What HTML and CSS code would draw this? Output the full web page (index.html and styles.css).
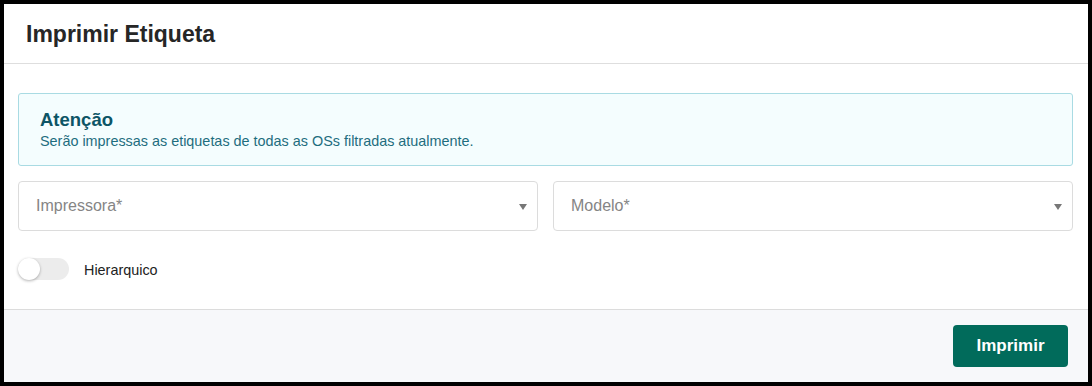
FILE: index.html
```html
<!DOCTYPE html>
<html lang="pt">
<head>
<meta charset="utf-8">
<link rel="stylesheet" href="styles.css">
</head>
<body>
<div class="modal">
  <div class="modal-header">
    <h1 class="modal-title">Imprimir Etiqueta</h1>
  </div>
  <div class="modal-body">
    <div class="alert">
      <div class="alert-title">Atenção</div>
      <div class="alert-text">Serão impressas as etiquetas de todas as OSs filtradas atualmente.</div>
    </div>
    <div class="fields">
      <div class="select">
        <span class="placeholder">Impressora*</span>
        <span class="caret"></span>
      </div>
      <div class="select">
        <span class="placeholder">Modelo*</span>
        <span class="caret"></span>
      </div>
    </div>
    <label class="toggle-row">
      <span class="toggle"><span class="knob"></span></span>
      <span class="toggle-label">Hierarquico</span>
    </label>
  </div>
  <div class="modal-footer">
    <button class="btn-primary">Imprimir</button>
  </div>
</div>
</body>
</html>
```
FILE: styles.css
```css
html, body {
  margin: 0;
  padding: 0;
}
body {
  background: #000;
  padding: 4px;
  font-family: "Liberation Sans", Arial, sans-serif;
  width: 1084px;
  height: 378px;
}
.modal {
  background: #fff;
  height: 378px;
  display: flex;
  flex-direction: column;
}
.modal-header {
  border-bottom: 1px solid #dedede;
  display: flex;
  align-items: center;
  padding-left: 22px;
  box-sizing: border-box;
  height: 60px;
}
.modal-title {
  margin: 0;
  font-size: 23px;
  font-weight: 700;
  color: #262626;
  padding-top: 1px;
}
.modal-body {
  padding: 29px 15px 0 14px;
  flex: 1;
}
.alert {
  border: 1px solid #a9dbe3;
  background: #f4fdfe;
  border-radius: 3px;
  padding: 15px 21px 0 21px;
  height: 73px;
  box-sizing: border-box;
}
.alert-title {
  font-size: 18.5px;
  font-weight: 700;
  color: #0d5566;
  line-height: 22px;
}
.alert-text {
  font-size: 14.4px;
  color: #1e6d7e;
  line-height: 18px;
  margin-top: 1px;
}
.fields {
  display: flex;
  gap: 15px;
  margin-top: 15px;
}
.select {
  flex: 1;
  height: 50px;
  border: 1px solid #dcdcdc;
  border-radius: 4px;
  box-sizing: border-box;
  display: flex;
  align-items: center;
  justify-content: space-between;
  padding: 0 10px 0 17px;
}
.placeholder {
  font-size: 16px;
  color: #858585;
}
.caret {
  width: 0;
  height: 0;
  border-left: 4px solid transparent;
  border-right: 4px solid transparent;
  border-top: 6px solid #777;
  margin-top: 2px;
}
.toggle-row {
  display: flex;
  align-items: center;
  margin-top: 27px;
  gap: 15px;
}
.toggle {
  width: 51px;
  height: 22px;
  border-radius: 11px;
  background: #ececec;
  position: relative;
  display: block;
}
.knob {
  position: absolute;
  left: 0;
  top: 0;
  width: 22px;
  height: 22px;
  border-radius: 50%;
  background: #fff;
  box-shadow: 0 1px 3px rgba(0,0,0,0.3);
}
.toggle-label {
  font-size: 14.4px;
  color: #222;
  padding-top: 1px;
}
.modal-footer {
  border-top: 1px solid #dcdcdc;
  background: #f7f8fa;
  height: 73px;
  box-sizing: border-box;
  display: flex;
  justify-content: flex-end;
  align-items: center;
  padding-right: 20px;
}
.btn-primary {
  width: 115px;
  height: 42px;
  background: #016b5b;
  color: #fff;
  border: none;
  border-radius: 4px;
  font-family: "Liberation Sans", Arial, sans-serif;
  font-weight: 700;
  font-size: 17px;
}
```
